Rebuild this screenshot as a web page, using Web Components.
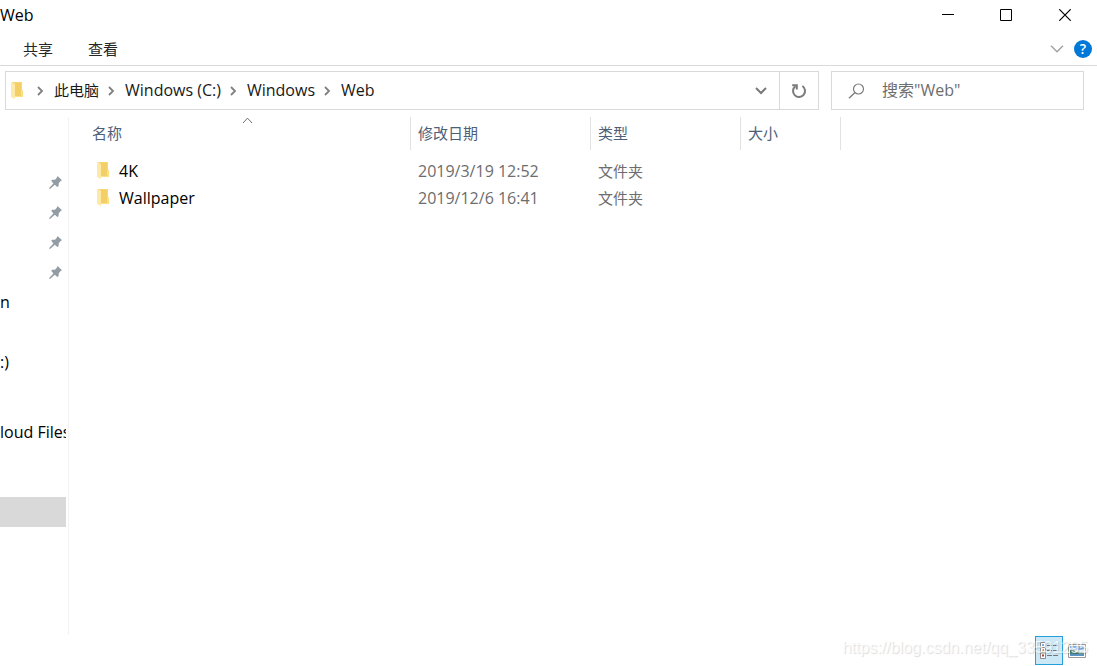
<!DOCTYPE html>
<html lang="zh-CN">
<head>
<meta charset="utf-8">
<title>Web</title>
<style>
  html, body { margin: 0; height: 100%; }
  body { font-family: "Open Sans", "Noto Sans CJK SC", sans-serif; font-size: 16px; color: #000; background: #fff; }
</style>
</head>
<body>
<explorer-window></explorer-window>
<script>
const define = (name, html) => {
  const template = document.createElement('template');
  template.innerHTML = html;
  customElements.define(name, class extends HTMLElement {
    constructor() {
      super();
      this.attachShadow({ mode: 'open' }).append(template.content.cloneNode(true));
    }
  });
};

const reset = `
  * { box-sizing: border-box; }
  button { font: inherit; color: inherit; background: none; border: 0; margin: 0; padding: 0; display: flex; align-items: center; justify-content: center; }
  svg { display: block; flex: none; }
`;

define('folder-icon', `
  <style>:host { display: block; flex: none; } svg { display: block; }</style>
  <svg width="12" height="17" viewBox="0 0 12 17" aria-hidden="true">
    <path d="M1 0H11V8H12V15H4Z" fill="#f7d774"/>
    <path d="M4 1H10V14H4Z" fill="#f3cf67"/>
    <path d="M10 8H12V15H4V14H10Z" fill="#ffdf83"/>
    <path d="M0 0L4 2V17L0 15Z" fill="#ffe9a6"/>
  </svg>`);

define('pin-icon', `
  <style>:host { display: block; } svg { display: block; }</style>
  <svg width="13" height="13" viewBox="0 0 13 13" aria-hidden="true">
    <path d="M8.5 0L13 4.2L11.6 5L9.8 7.2L9.5 10.2L8.4 11L5.8 8.7L1 13L0 12.2L4.4 7.4L2.2 4.8L3.2 3.8L6 3.7L8 1.5Z" fill="#929ca5"/>
  </svg>`);

define('title-bar', `
  <style>${reset}
    :host { display: flex; height: 30px; align-items: center; padding-right: 2px; }
    h1 { flex: 1; margin: 0; font-size: 16px; font-weight: 400; line-height: 30px; }
    button { width: 58px; height: 30px; }
    .close { width: 60px; }
  </style>
  <h1><slot></slot></h1>
  <button aria-label="最小化"><svg width="12" height="12" viewBox="0 0 12 12"><path d="M0 5.5H12" stroke="#000"/></svg></button>
  <button aria-label="最大化"><svg width="12" height="12" viewBox="0 0 12 12"><path d="M.5.5H11.5V11.5H.5Z" fill="none" stroke="#000"/></svg></button>
  <button class="close" aria-label="关闭"><svg width="12" height="12" viewBox="0 0 12 12"><path d="M.3.3L11.7 11.7M11.7.3L.3 11.7" stroke="#000" stroke-width="1.2"/></svg></button>`);

define('ribbon-tabs', `
  <style>${reset}
    :host { display: flex; height: 36px; align-items: center; border-bottom: 1px solid #d9dadb; padding: 2px 5px 0 23px; font-size: 15px; color: #262626; }
    nav { flex: 1; display: flex; gap: 35px; }
    .tools { display: flex; gap: 10px; align-items: center; }
    .help { width: 18px; height: 18px; border-radius: 50%; background: #0078d7; color: #fff; font-size: 14px; line-height: 18px; font-weight: 600; }
  </style>
  <nav><button>共享</button><button>查看</button></nav>
  <div class="tools">
    <button aria-label="展开功能区"><svg width="14" height="8" viewBox="0 0 14 8"><path d="M1 .8L7 6.8L13 .8" fill="none" stroke="#a3a3a3" stroke-width="1.5"/></svg></button>
    <button class="help" aria-label="帮助">?</button>
  </div>`);

define('crumb-item', `
  <style>${reset}
    :host { display: flex; align-items: center; font-size: var(--size, 16px); }
    svg { margin-right: 10px; }
    button { white-space: nowrap; padding-bottom: 2px; }
  </style>
  <svg width="7" height="10" viewBox="0 0 7 10" aria-hidden="true"><path d="M1 1L5 5L1 9" fill="none" stroke="#808080" stroke-width="1.8"/></svg>
  <button><slot></slot></button>`);

define('address-bar', `
  <style>${reset}
    :host { display: flex; gap: 12px; padding: 5px 13px 0 5px; }
    .path, .search { display: flex; align-items: center; height: 39px; border: 1px solid #d9d9d9; }
    .path { flex: 1; min-width: 0; padding-left: 5px; color: #191919; }
    .crumbs { flex: 1; display: flex; gap: 9px; align-items: center; padding-left: 14px; min-width: 0; }
    .cjk { --size: 15px; }
    .drop { width: 36px; height: 37px; }
    .reload { width: 39px; height: 37px; border-left: 1px solid #d9d9d9; }
    .search { width: 253px; padding-left: 16px; }
    input { flex: 1; min-width: 0; margin: 0 0 0 17px; padding: 0 0 2px; border: 0; outline: 0; background: none; font: inherit; color: #6d6d6d; }
    input::placeholder { color: #6d6d6d; opacity: 1; }
  </style>
  <div class="path">
    <folder-icon></folder-icon>
    <div class="crumbs">
      <crumb-item class="cjk">此电脑</crumb-item><crumb-item>Windows (C:)</crumb-item><crumb-item>Windows</crumb-item><crumb-item>Web</crumb-item>
    </div>
    <button class="drop" aria-label="历史记录"><svg width="12" height="8" viewBox="0 0 12 8"><path d="M1 1L6 6L11 1" fill="none" stroke="#7a7a7a" stroke-width="2"/></svg></button>
    <button class="reload" aria-label="刷新"><svg width="16" height="16" viewBox="0 0 16 16"><path d="M11.4 3A6 6 0 1 1 4.4 3.2" fill="none" stroke="#7a7a7a" stroke-width="2"/><path d="M1.2 2.2H5.8V6.6" fill="none" stroke="#7a7a7a" stroke-width="2"/></svg></button>
  </div>
  <label class="search">
    <svg width="17" height="16" viewBox="0 0 17 16" aria-hidden="true"><circle cx="10.5" cy="6" r="5" fill="none" stroke="#7d7d7d" stroke-width="1.2"/><path d="M7 9.6L1 15.3" stroke="#7d7d7d" stroke-width="1.4"/></svg>
    <input type="text" placeholder='搜索"Web"' aria-label='搜索"Web"'>
  </label>`);

define('nav-pane', `
  <style>${reset}
    :host { display: block; width: 69px; padding: 50px 2px 0 0; border-right: 1px solid #f2f2f2; overflow: hidden; }
    ul { list-style: none; margin: 0 0 40px; padding: 0; }
    ul:last-child { margin: 0; }
    li { height: 30px; line-height: 30px; white-space: nowrap; overflow: hidden; }
    .pin { display: flex; align-items: center; justify-content: flex-end; padding-right: 4px; }
    .cloud { margin-bottom: 50px; }
    .selected { background: #d9d9d9; }
  </style>
  <ul>
    <li class="pin"><pin-icon></pin-icon></li>
    <li class="pin"><pin-icon></pin-icon></li>
    <li class="pin"><pin-icon></pin-icon></li>
    <li class="pin"><pin-icon></pin-icon></li>
    <li>n</li>
    <li></li>
    <li>:)</li>
  </ul>
  <ul>
    <li class="cloud">loud Files</li>
    <li class="selected"></li>
  </ul>`);

define('file-list', `
  <style>${reset}
    :host { display: block; flex: 1; min-width: 0; }
    table { border-collapse: separate; border-spacing: 0; table-layout: fixed; width: 772px; }
    .name { width: 342px; } .date { width: 180px; } .type { width: 150px; } .size { width: 100px; }
    th { position: relative; height: 33px; padding: 0 0 2px 7px; border-right: 1px solid #e2e2e2; text-align: left; font-size: 15px; line-height: 20px; font-weight: 400; color: #4c607a; }
    th:first-child, td:first-child { padding-left: 23px; }
    th svg { position: absolute; top: 0; left: 50%; margin-left: 2px; }
    tbody::before { content: ""; display: table-row; height: 8px; }
    td { height: 27px; padding: 0 0 2px 7px; line-height: 24px; color: #6d6d6d; white-space: nowrap; }
    td:last-child, .kind { font-size: 15px; }
    .file { display: flex; align-items: center; gap: 10px; padding-left: 5px; color: #000; }
  </style>
  <table>
    <colgroup><col class="name"><col class="date"><col class="type"><col class="size"></colgroup>
    <thead><tr>
      <th scope="col">名称<svg width="11" height="7" viewBox="0 0 11 7" aria-hidden="true"><path d="M1 6L5.5 1.2L10 6" fill="none" stroke="#6d6d6d"/></svg></th>
      <th scope="col">修改日期</th><th scope="col">类型</th><th scope="col">大小</th>
    </tr></thead>
    <tbody>
      <tr><td><div class="file"><folder-icon></folder-icon>4K</div></td><td>2019/3/19 12:52</td><td class="kind">文件夹</td><td></td></tr>
      <tr><td><div class="file"><folder-icon></folder-icon>Wallpaper</div></td><td>2019/12/6 16:41</td><td class="kind">文件夹</td><td></td></tr>
    </tbody>
  </table>`);

define('status-bar', `
  <style>${reset}
    :host { display: flex; position: relative; justify-content: flex-end; height: 31px; padding: 1px 6px 1px 0; }
    button { width: 28px; height: 29px; }
    .on { background: #cce8f6; border: 1px solid #26a0da; }
    .mark { position: absolute; right: 9px; top: 3px; font: 16px/20px "Liberation Sans", sans-serif; color: rgba(255,255,255,.75); text-shadow: 1px 1px 1px rgba(0,0,0,.14); white-space: nowrap; pointer-events: none; }
  </style>
  <button class="on" aria-label="详细信息"><svg width="18" height="17" viewBox="0 0 18 17">
    <path d="M.5.5H5.5V16.5H.5ZM.5 5.5H5.5M.5 11H5.5" fill="#fff" stroke="#8b8b8b"/>
    <path d="M2 2H4V4H2Z" fill="#74aee0"/><path d="M2 7H4V9H2Z" fill="#d29a62"/><path d="M2 12.5H4V14.5H2Z" fill="#b33a32"/>
    <path d="M7 3.5H18M7 8.5H18M7 13.5H18" stroke="#777" stroke-dasharray="5 1"/></svg></button>
  <button aria-label="大缩略图"><svg width="18" height="14" viewBox="0 0 18 14">
    <path d="M.5.5H17.5V13.5H.5Z" fill="#fff" stroke="#999"/><path d="M2 2H16V12H2Z" fill="#7fb2e3"/><path d="M2 4Q5 3 8 5T16 5V9H2Z" fill="#dcebf6"/><path d="M2 6Q5 5 8 8L12 9V10H2Z" fill="#4b7f6c"/><path d="M11 9L16 8V10H11Z" fill="#6f9a86"/><path d="M2 10H16V12H2Z" fill="#5b93c4"/></svg></button>
  <span class="mark"><slot></slot></span>`);

define('explorer-window', `
  <style>${reset}
    :host { display: flex; flex-direction: column; min-height: 100%; background: #fff; }
    main { flex: 1; display: flex; padding-top: 7px; }
  </style>
  <title-bar>Web</title-bar>
  <ribbon-tabs></ribbon-tabs>
  <address-bar></address-bar>
  <main><nav-pane></nav-pane><file-list></file-list></main>
  <status-bar>https://blog.csdn.net/qq_33591295</status-bar>`);
</script>
</body>
</html>
